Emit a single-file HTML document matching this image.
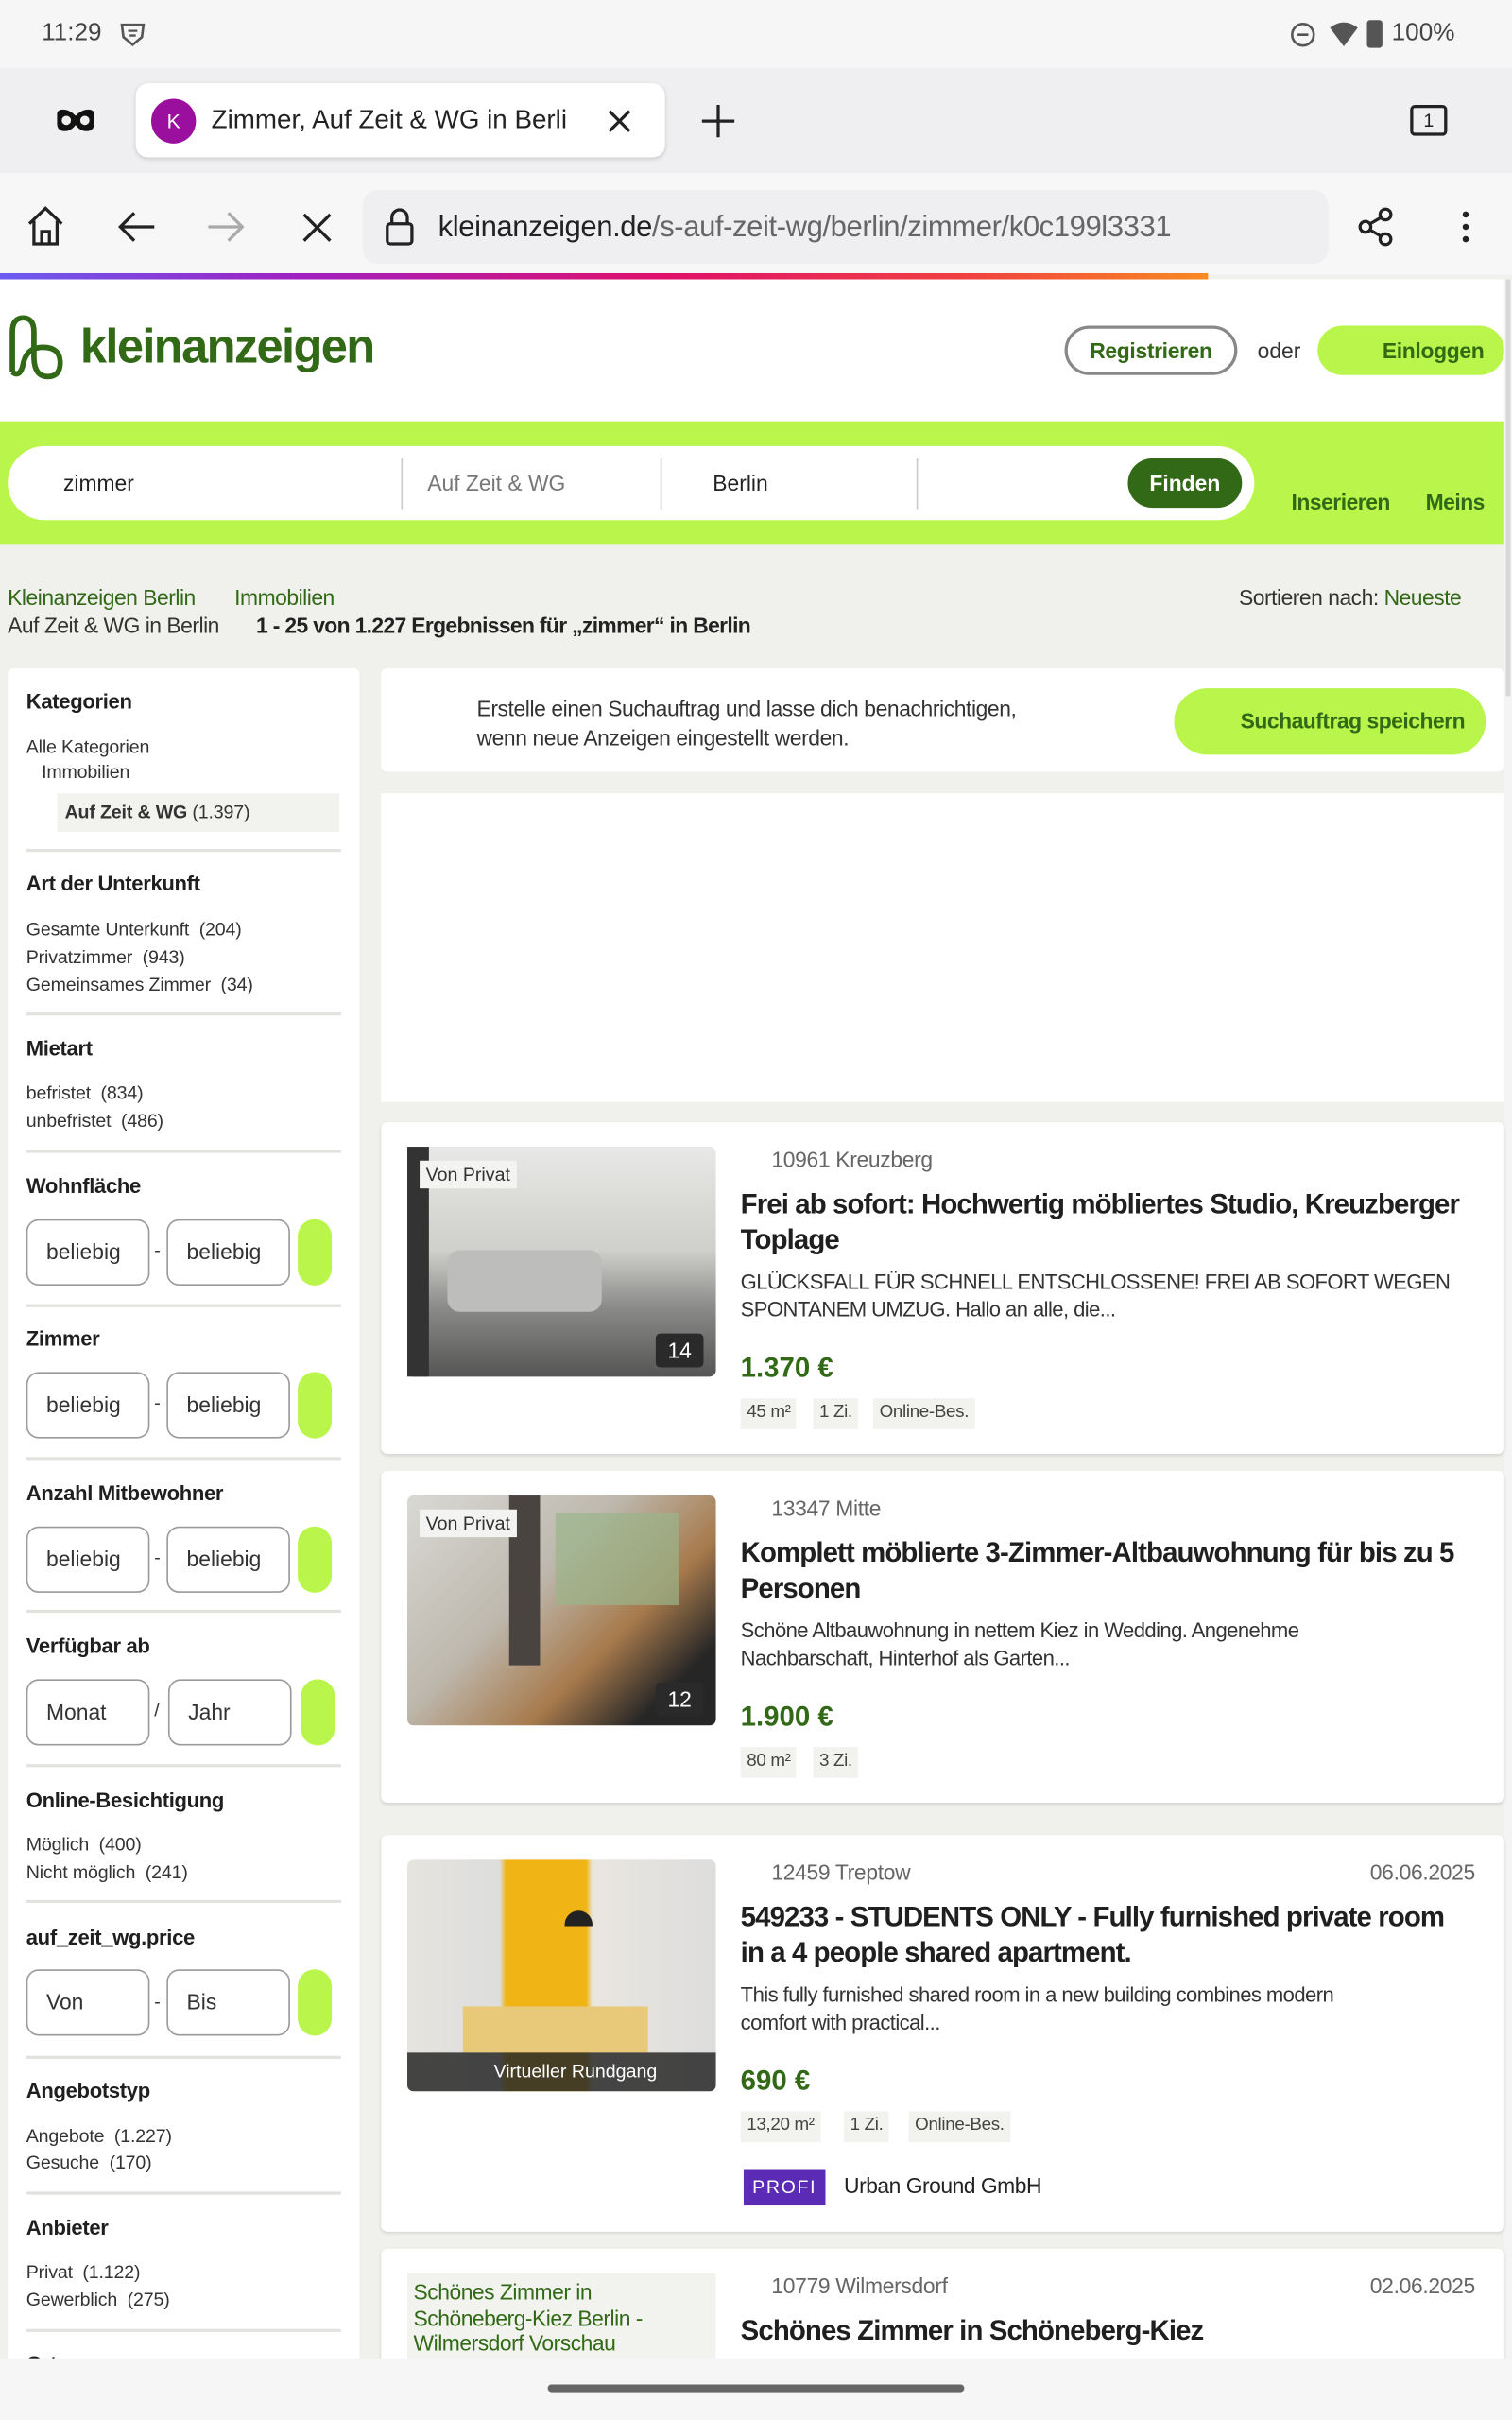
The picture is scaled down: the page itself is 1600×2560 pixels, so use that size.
<!DOCTYPE html>
<html><head><meta charset="utf-8">
<style>
*{margin:0;padding:0;box-sizing:border-box}
html,body{width:1600px;height:2560px;overflow:hidden;background:#f0f0ec}
#w{position:absolute;left:0;top:0;width:980px;height:1568px;transform:scale(1.632653);transform-origin:0 0;font-family:"Liberation Sans",Arial,sans-serif;color:#1f1f1f;background:#f0f0ec;overflow:hidden}
.a{position:absolute;white-space:nowrap}
.sb{font-size:13.5px;font-weight:bold;color:#1f1f1f;letter-spacing:-.2px}
.si{font-size:12px;color:#333;letter-spacing:-.1px}
.dv{position:absolute;left:17px;width:204px;height:2px;background:#e2e2de}
.in{position:absolute;height:43px;border:1.5px solid #9a9a9a;border-radius:8px;background:#fff;font-size:14px;color:#333;padding:12px 0 0 12px}
.pl{position:absolute;width:22px;height:43px;border-radius:11px;background:#b9f54a}
.card{position:absolute;left:247px;width:728px;background:#fff;border-radius:4px;box-shadow:0 1px 2px rgba(0,0,0,.12)}
.loc{font-size:14px;color:#666;letter-spacing:-.2px}
.tt{font-size:18px;font-weight:bold;color:#1f1f1f;line-height:23px;white-space:normal;letter-spacing:-.55px}
.ds{font-size:13.5px;color:#333;line-height:18px;white-space:normal;letter-spacing:-.35px}
.pr{font-size:18px;font-weight:bold;color:#326916}
.tg{position:absolute;height:20px;background:#f2f2ef;font-size:11.5px;color:#444;padding:3px 4px;letter-spacing:-.2px}
</style></head><body><div id="w">
<!-- status bar -->
<div class="a" style="left:0;top:0;width:980px;height:44px;background:#f6f6f6"></div>
<div class="a" style="left:27px;top:13px;font-size:16px;color:#444">11:29</div>
<svg class="a" style="left:77px;top:13px" width="18" height="18" viewBox="0 0 18 18"><path d="M2 3h14l-1 8-6 5-6-5z" fill="none" stroke="#555" stroke-width="1.6"/><path d="M6 7h6M7 10h4" stroke="#555" stroke-width="1.4"/></svg>
<svg class="a" style="left:836px;top:14px" width="17" height="17"><circle cx="8.5" cy="8.5" r="7" fill="none" stroke="#555" stroke-width="1.6"/><path d="M5 8.5h7" stroke="#555" stroke-width="1.6"/></svg>
<svg class="a" style="left:861px;top:14px" width="20" height="17"><path d="M1 4Q10-3 19 4L10 16z" fill="#555"/></svg>
<div class="a" style="left:886px;top:13px;width:10px;height:18px;background:#555;border-radius:2px"></div>
<div class="a" style="left:902px;top:13px;font-size:16px;color:#444">100%</div>
<!-- tab bar -->
<div class="a" style="left:0;top:44px;width:980px;height:68px;background:#efeff1"></div>
<svg class="a" style="left:36px;top:70px" width="26" height="16"><path d="M1 4Q1 1 5 1Q9 1 13 5Q17 1 21 1Q25 1 25 4L25 10Q25 15 20 15Q16 15 13 11Q10 15 6 15Q1 15 1 10z" fill="#111"/><circle cx="7" cy="8" r="3" fill="#efeff1"/><circle cx="19" cy="8" r="3" fill="#efeff1"/></svg>
<div class="a" style="left:88px;top:54px;width:343px;height:48px;background:#fff;border-radius:8px;box-shadow:0 1px 3px rgba(0,0,0,.15)"></div>
<div class="a" style="left:98px;top:64px;width:29px;height:29px;border-radius:50%;background:#9b0f9e;color:#fff;font-size:13px;text-align:center;line-height:29px">K</div>
<div class="a" style="left:137px;top:68px;font-size:17px;color:#222;width:235px;overflow:hidden">Zimmer, Auf Zeit &amp; WG in Berli</div>
<svg class="a" style="left:393px;top:70px" width="17" height="17"><path d="M2 2L15 15M15 2L2 15" stroke="#222" stroke-width="2"/></svg>
<svg class="a" style="left:454px;top:67px" width="23" height="23"><path d="M11.5 1v21M1 11.5h21" stroke="#222" stroke-width="2"/></svg>
<div class="a" style="left:914px;top:68px;width:24px;height:20px;border:2px solid #222;border-radius:3px;font-size:12px;text-align:center;line-height:16px">1</div>
<!-- toolbar -->
<div class="a" style="left:0;top:112px;width:980px;height:66px;background:#f7f7f8"></div>
<svg class="a" style="left:16px;top:133px" width="27" height="27"><path d="M3 12L13.5 2 24 12M6 10v15h15V10M11 25v-8h5v8" fill="none" stroke="#222" stroke-width="2"/></svg>
<svg class="a" style="left:76px;top:136px" width="25" height="22"><path d="M24 11H3M11 2L2 11l9 9" fill="none" stroke="#222" stroke-width="2"/></svg>
<svg class="a" style="left:134px;top:136px" width="25" height="22"><path d="M1 11h21M14 2l9 9-9 9" fill="none" stroke="#aaa" stroke-width="2"/></svg>
<svg class="a" style="left:195px;top:137px" width="21" height="21"><path d="M2 2L19 19M19 2L2 19" stroke="#222" stroke-width="2"/></svg>
<div class="a" style="left:235px;top:123px;width:626px;height:48px;background:#efeff1;border-radius:10px"></div>
<svg class="a" style="left:249px;top:134px" width="20" height="26"><rect x="2" y="11" width="16" height="13" rx="2" fill="none" stroke="#222" stroke-width="2"/><path d="M5 11V7a5 5 0 0110 0v4" fill="none" stroke="#222" stroke-width="2"/></svg>
<div class="a" style="left:284px;top:137px;font-size:19px;color:#222;letter-spacing:-.25px">kleinanzeigen.de<span style="color:#666">/s-auf-zeit-wg/berlin/zimmer/k0c199l3331</span></div>
<svg class="a" style="left:879px;top:134px" width="26" height="26"><circle cx="19" cy="5" r="3.5" fill="none" stroke="#222" stroke-width="2"/><circle cx="6" cy="13" r="3.5" fill="none" stroke="#222" stroke-width="2"/><circle cx="19" cy="21" r="3.5" fill="none" stroke="#222" stroke-width="2"/><path d="M9 11l7-4M9 15l7 4" stroke="#222" stroke-width="2"/></svg>
<div class="a" style="left:948px;top:137px;width:4px;height:4px;border-radius:2px;background:#222;box-shadow:0 8px 0 #222,0 16px 0 #222"></div>
<div class="a" style="left:0;top:177px;width:783px;height:4px;background:linear-gradient(90deg,#6a5cf0,#a020c0 25%,#e0106a 55%,#f04040 80%,#f88a20)"></div>
<!-- header -->
<div class="a" style="left:0;top:181px;width:975px;height:92px;background:#fff"></div>
<svg class="a" style="left:4px;top:203px" width="38" height="44" viewBox="0 0 38 44"><path d="M4 38V12Q4 3 11 3Q18 3 18 12V28Q18 41 27 41Q35 41 35 32Q35 22 24 22Q13 22 11 33Q9 42 4 38" fill="none" stroke="#326916" stroke-width="3.5" stroke-linejoin="round"/></svg>
<div class="a" style="left:52px;top:207px;font-size:31px;color:#326916;font-weight:bold;letter-spacing:-1px">kleinanzeigen</div>
<div class="a" style="left:690px;top:211px;width:112px;height:32px;border:2px solid #888;border-radius:16px;font-size:14px;font-weight:bold;color:#326916;text-align:center;line-height:28px;letter-spacing:-.2px">Registrieren</div>
<div class="a" style="left:815px;top:219px;font-size:14px;color:#333">oder</div>
<div class="a" style="left:854px;top:211px;width:121px;height:32px;background:#b9f54a;border-radius:16px;font-size:14px;font-weight:bold;color:#326916;line-height:32px;padding-left:42px;letter-spacing:-.2px">Einloggen</div>
<div class="a" style="left:0;top:273px;width:975px;height:80px;background:#b9f54a"></div>
<div class="a" style="left:5px;top:289px;width:808px;height:48px;background:#fff;border-radius:24px"></div>
<div class="a" style="left:41px;top:305px;font-size:14px;color:#222">zimmer</div>
<div class="a" style="left:260px;top:297px;width:1px;height:33px;background:#ccc"></div>
<div class="a" style="left:277px;top:305px;font-size:14px;color:#777">Auf Zeit &amp; WG</div>
<div class="a" style="left:428px;top:297px;width:1px;height:33px;background:#ccc"></div>
<div class="a" style="left:462px;top:305px;font-size:14px;color:#222">Berlin</div>
<div class="a" style="left:594px;top:297px;width:1px;height:33px;background:#ccc"></div>
<div class="a" style="left:731px;top:297px;width:74px;height:32px;background:#326916;border-radius:16px;color:#fff;font-size:14px;font-weight:bold;text-align:center;line-height:32px">Finden</div>
<div class="a" style="left:837px;top:317px;font-size:14px;font-weight:bold;color:#326916;letter-spacing:-.3px">Inserieren</div>
<div class="a" style="left:924px;top:317px;font-size:14px;font-weight:bold;color:#326916;letter-spacing:-.3px">Meins</div>
<div class="a" style="left:975px;top:181px;width:5px;height:1387px;background:#f4f4f4"></div>
<div class="a" style="left:976px;top:181px;width:3px;height:270px;background:#d8d8d8"></div>
<!-- breadcrumb -->
<div class="a" style="left:5px;top:379px;font-size:14px;color:#326916;letter-spacing:-.3px">Kleinanzeigen Berlin</div>
<div class="a" style="left:152px;top:379px;font-size:14px;color:#326916;letter-spacing:-.3px">Immobilien</div>
<div class="a" style="left:5px;top:397px;font-size:14px;color:#333;letter-spacing:-.3px">Auf Zeit &amp; WG in Berlin</div>
<div class="a" style="left:166px;top:397px;font-size:14px;font-weight:bold;color:#222;letter-spacing:-.4px">1 - 25 von 1.227 Ergebnissen für „zimmer“ in Berlin</div>
<div class="a" style="left:803px;top:379px;font-size:14px;color:#333;letter-spacing:-.3px">Sortieren nach: <span style="color:#326916">Neueste</span></div>
<!-- sidebar -->
<div class="a" style="left:5px;top:433px;width:228px;height:1110px;background:#fff;border-radius:4px"></div>
<div class="a sb" style="left:17px;top:447px">Kategorien</div>
<div class="a si" style="left:17px;top:477px">Alle Kategorien</div>
<div class="a si" style="left:27px;top:493px">Immobilien</div>
<div class="a" style="left:37px;top:514px;width:183px;height:25px;background:#f2f2ef"></div>
<div class="a si" style="left:42px;top:519px"><b>Auf Zeit &amp; WG</b> (1.397)</div>
<div class="dv" style="top:550px"></div>
<div class="a sb" style="left:17px;top:565px">Art der Unterkunft</div>
<div class="a si" style="left:17px;top:595px">Gesamte Unterkunft&nbsp; (204)</div>
<div class="a si" style="left:17px;top:613px">Privatzimmer&nbsp; (943)</div>
<div class="a si" style="left:17px;top:631px">Gemeinsames Zimmer&nbsp; (34)</div>
<div class="dv" style="top:656px"></div>
<div class="a sb" style="left:17px;top:672px">Mietart</div>
<div class="a si" style="left:17px;top:701px">befristet&nbsp; (834)</div>
<div class="a si" style="left:17px;top:719px">unbefristet&nbsp; (486)</div>
<div class="dv" style="top:745px"></div>
<div class="a sb" style="left:17px;top:761px">Wohnfläche</div>
<div class="in" style="left:17px;top:790px;width:80px">beliebig</div><div class="a si" style="left:100px;top:803px">-</div><div class="in" style="left:108px;top:790px;width:80px">beliebig</div><div class="pl" style="left:193px;top:790px"></div>
<div class="dv" style="top:845px"></div>
<div class="a sb" style="left:17px;top:860px">Zimmer</div>
<div class="in" style="left:17px;top:889px;width:80px">beliebig</div><div class="a si" style="left:100px;top:902px">-</div><div class="in" style="left:108px;top:889px;width:80px">beliebig</div><div class="pl" style="left:193px;top:889px"></div>
<div class="dv" style="top:944px"></div>
<div class="a sb" style="left:17px;top:960px">Anzahl Mitbewohner</div>
<div class="in" style="left:17px;top:989px;width:80px">beliebig</div><div class="a si" style="left:100px;top:1002px">-</div><div class="in" style="left:108px;top:989px;width:80px">beliebig</div><div class="pl" style="left:193px;top:989px"></div>
<div class="dv" style="top:1043px"></div>
<div class="a sb" style="left:17px;top:1059px">Verfügbar ab</div>
<div class="in" style="left:17px;top:1088px;width:80px">Monat</div><div class="a si" style="left:100px;top:1101px">/</div><div class="in" style="left:109px;top:1088px;width:80px">Jahr</div><div class="pl" style="left:195px;top:1088px"></div>
<div class="dv" style="top:1143px"></div>
<div class="a sb" style="left:17px;top:1159px">Online-Besichtigung</div>
<div class="a si" style="left:17px;top:1188px">Möglich&nbsp; (400)</div>
<div class="a si" style="left:17px;top:1206px">Nicht möglich&nbsp; (241)</div>
<div class="dv" style="top:1231px"></div>
<div class="a sb" style="left:17px;top:1248px">auf_zeit_wg.price</div>
<div class="in" style="left:17px;top:1276px;width:80px">Von</div><div class="a si" style="left:100px;top:1290px">-</div><div class="in" style="left:108px;top:1276px;width:80px">Bis</div><div class="pl" style="left:193px;top:1276px"></div>
<div class="dv" style="top:1332px"></div>
<div class="a sb" style="left:17px;top:1347px">Angebotstyp</div>
<div class="a si" style="left:17px;top:1377px">Angebote&nbsp; (1.227)</div>
<div class="a si" style="left:17px;top:1394px">Gesuche&nbsp; (170)</div>
<div class="dv" style="top:1420px"></div>
<div class="a sb" style="left:17px;top:1436px">Anbieter</div>
<div class="a si" style="left:17px;top:1465px">Privat&nbsp; (1.122)</div>
<div class="a si" style="left:17px;top:1483px">Gewerblich&nbsp; (275)</div>
<div class="dv" style="top:1509px"></div>
<div class="a sb" style="left:17px;top:1524px">Ort</div>
<!-- banner -->
<div class="a" style="left:247px;top:433px;width:728px;height:67px;background:#fff;border-radius:4px"></div>
<div class="a" style="left:309px;top:450px;font-size:14px;color:#333;line-height:19px;letter-spacing:-.25px">Erstelle einen Suchauftrag und lasse dich benachrichtigen,<br>wenn neue Anzeigen eingestellt werden.</div>
<div class="a" style="left:761px;top:446px;width:202px;height:43px;background:#b9f54a;border-radius:22px;font-size:14px;font-weight:bold;color:#326916;line-height:43px;padding-left:43px;letter-spacing:-.3px">Suchauftrag speichern</div>
<div class="a" style="left:247px;top:514px;width:728px;height:200px;background:#fff"></div>
<!-- card1 -->
<div class="card" style="top:727px;height:215px"></div>
<div class="a" style="left:264px;top:743px;width:200px;height:149px;border-radius:4px;background:linear-gradient(180deg,#e8e8e6 0%,#cfcfcc 45%,#8a8a88 70%,#555 100%)"></div>
<div class="a" style="left:264px;top:743px;width:14px;height:149px;background:#333"></div>
<div class="a" style="left:290px;top:810px;width:100px;height:40px;background:#bdbdbb;border-radius:8px"></div>
<div class="a" style="left:272px;top:752px;background:#f3f3f1;font-size:12px;padding:2px 4px;color:#333">Von Privat</div>
<div class="a" style="left:425px;top:864px;width:31px;height:22px;background:#2a2a2a;border-radius:3px;color:#fff;font-size:14px;text-align:center;line-height:22px">14</div>
<div class="a loc" style="left:500px;top:743px">10961 Kreuzberg</div>
<div class="a tt" style="left:480px;top:769px;width:485px">Frei ab sofort: Hochwertig möbliertes Studio, Kreuzberger Toplage</div>
<div class="a ds" style="left:480px;top:822px;width:480px">GLÜCKSFALL FÜR SCHNELL ENTSCHLOSSENE! FREI AB SOFORT WEGEN SPONTANEM UMZUG. Hallo an alle, die...</div>
<div class="a pr" style="left:480px;top:876px">1.370 €</div>
<div class="tg" style="left:480px;top:906px">45 m²</div><div class="tg" style="left:527px;top:906px">1 Zi.</div><div class="tg" style="left:566px;top:906px">Online-Bes.</div>
<!-- card2 -->
<div class="card" style="top:953px;height:215px"></div>
<div class="a" style="left:264px;top:969px;width:200px;height:149px;border-radius:4px;background:linear-gradient(135deg,#d9d9d4 0%,#bdb8ad 40%,#a77a4c 65%,#262626 85%)"></div>
<div class="a" style="left:330px;top:969px;width:20px;height:110px;background:#4a4440"></div>
<div class="a" style="left:360px;top:980px;width:80px;height:60px;background:#9ab58a;opacity:.7"></div>
<div class="a" style="left:272px;top:978px;background:#f3f3f1;font-size:12px;padding:2px 4px;color:#333">Von Privat</div>
<div class="a" style="left:425px;top:1090px;width:31px;height:22px;background:#2a2a2a;border-radius:3px;color:#fff;font-size:14px;text-align:center;line-height:22px">12</div>
<div class="a loc" style="left:500px;top:969px">13347 Mitte</div>
<div class="a tt" style="left:480px;top:995px;width:485px">Komplett möblierte 3-Zimmer-Altbauwohnung für bis zu 5 Personen</div>
<div class="a ds" style="left:480px;top:1048px;width:400px">Schöne Altbauwohnung in nettem Kiez in Wedding. Angenehme Nachbarschaft, Hinterhof als Garten...</div>
<div class="a pr" style="left:480px;top:1102px">1.900 €</div>
<div class="tg" style="left:480px;top:1132px">80 m²</div><div class="tg" style="left:527px;top:1132px">3 Zi.</div>
<!-- card3 -->
<div class="card" style="top:1189px;height:257px"></div>
<div class="a" style="left:264px;top:1205px;width:200px;height:150px;border-radius:4px;background:linear-gradient(90deg,#e6e4df 0%,#ddd 30%,#f0b414 32%,#f0b414 58%,#e9e6e0 60%,#ddd 100%)"></div>
<div class="a" style="left:300px;top:1300px;width:120px;height:30px;background:#e8c97a"></div>
<div class="a" style="left:366px;top:1238px;width:18px;height:10px;border-radius:9px 9px 0 0;background:#222"></div>
<div class="a" style="left:264px;top:1330px;width:200px;height:25px;background:rgba(40,40,40,.85);color:#fff;font-size:12px;line-height:25px;padding-left:56px;border-radius:0 0 4px 4px">Virtueller Rundgang</div>
<div class="a loc" style="left:500px;top:1205px">12459 Treptow</div>
<div class="a loc" style="left:888px;top:1205px">06.06.2025</div>
<div class="a tt" style="left:480px;top:1231px;width:470px">549233 - STUDENTS ONLY - Fully furnished private room in a 4 people shared apartment.</div>
<div class="a ds" style="left:480px;top:1284px;width:430px">This fully furnished shared room in a new building combines modern comfort with practical...</div>
<div class="a pr" style="left:480px;top:1338px">690 €</div>
<div class="tg" style="left:480px;top:1368px">13,20 m²</div><div class="tg" style="left:547px;top:1368px">1 Zi.</div><div class="tg" style="left:589px;top:1368px">Online-Bes.</div>
<div class="a" style="left:482px;top:1406px;width:53px;height:23px;background:#5b2bb5;color:#fff;font-size:12px;letter-spacing:1px;text-align:center;line-height:23px">PROFI</div>
<div class="a" style="left:547px;top:1408px;font-size:14px;color:#222;letter-spacing:-.3px">Urban Ground GmbH</div>
<!-- card4 -->
<div class="card" style="top:1457px;height:120px"></div>
<div class="a" style="left:264px;top:1473px;width:200px;height:60px;background:#f2f2ef"></div>
<div class="a" style="left:268px;top:1477px;font-size:14px;color:#326916;line-height:16.5px;letter-spacing:-.3px">Schönes Zimmer in<br>Schöneberg-Kiez Berlin -<br>Wilmersdorf Vorschau</div>
<div class="a loc" style="left:500px;top:1473px">10779 Wilmersdorf</div>
<div class="a loc" style="left:888px;top:1473px">02.06.2025</div>
<div class="a tt" style="left:480px;top:1499px">Schönes Zimmer in Schöneberg-Kiez</div>
<!-- nav bar -->
<div class="a" style="left:0;top:1528px;width:980px;height:40px;background:#f6f6f6"></div>
<div class="a" style="left:355px;top:1545px;width:270px;height:5px;border-radius:3px;background:#666"></div>
</div></body></html>
